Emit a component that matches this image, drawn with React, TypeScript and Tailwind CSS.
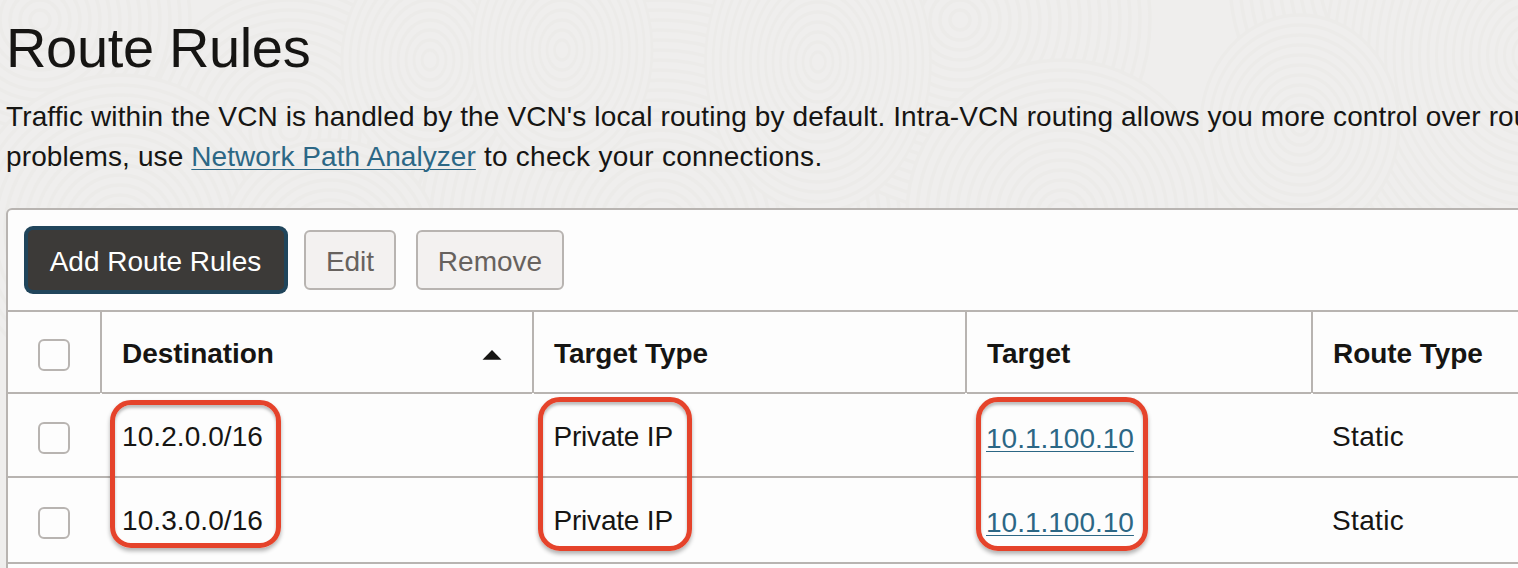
import type { ReactNode } from "react";

type Ripple = { cx: number; cy: number; r: number; sx?: number };

const ripples: Ripple[] = [
  { cx: 40, cy: 20, r: 150 },
  { cx: 660, cy: 230, r: 250 },
  { cx: 1420, cy: -20, r: 190 },
  { cx: 960, cy: 20, r: 190 },
  { cx: 290, cy: 130, r: 140 },
  { cx: 430, cy: 60, r: 110, sx: 0.8 },
  { cx: 120, cy: 230, r: 155 },
  { cx: 1530, cy: 55, r: 240, sx: 0.85 },
  { cx: 818, cy: 62, r: 150, sx: 0.75 },
  { cx: 562, cy: 50, r: 120, sx: 0.75 },
  { cx: 1300, cy: 125, r: 110, sx: 0.9 },
  { cx: 1062, cy: 215, r: 155 },
  { cx: 330, cy: 250, r: 110 },
];

function Texture() {
  return (
    <svg className="absolute inset-0 -z-10 h-full w-full" viewBox="0 0 1518 568" aria-hidden="true">
      {ripples.map((g, i) => (
        <g key={i} transform={`translate(${g.cx} ${g.cy}) scale(${g.sx ?? 1} 1)`}>
          <circle r={g.r} fill="#efeeed" />
          {Array.from({ length: Math.floor(g.r / 10) }, (_, k) => (
            <circle key={k} r={g.r - k * 10} fill="none" stroke="#ecebe9" strokeWidth={3.5} />
          ))}
        </g>
      ))}
    </svg>
  );
}

function Checkbox() {
  return <span className="block size-8 rounded-md border-2 border-[#b8b4b1] bg-[#fdfdfd]" />;
}

function HeadCell({ children, sorted }: { children: ReactNode; sorted?: boolean }) {
  return (
    <div className="relative flex h-[81px] justify-between border-l-2 border-[#b8b4b1] pt-[26px] pl-5 font-bold after:absolute after:top-[81px] after:-left-[2px] after:h-px after:w-[2px] after:bg-[#fdfdfd]">
      <span className="tracking-[-0.05px]">{children}</span>
      {sorted && (
        <svg className="mt-3 mr-[30px] h-[10px] w-5" viewBox="0 0 20 10">
          <path d="M0.5 9.7L10 0L19.5 9.7Z" fill="#161513" />
        </svg>
      )}
    </div>
  );
}

const columns = "grid grid-cols-[92px_432px_433px_346px_1fr] border-b-2 border-[#b8b4b1]";
const link = "text-[#2c6785] underline decoration-1 underline-offset-[3px]";

function Row({ destination, tall }: { destination: string; tall?: boolean }) {
  return (
    <div className={`${columns} ${tall ? "h-[86px]" : "h-[84px]"}`}>
      <div className={`pl-[30px] ${tall ? "pt-[29px]" : "pt-7"}`}>
        <Checkbox />
      </div>
      <div className="pt-[27px] pl-[22px] tracking-[0.08px]">{destination}</div>
      <div className="pt-[27px] pl-[21.5px] tracking-[-0.2px]">Private IP</div>
      <div className="pt-[29px] pl-[21px]">
        <a className={link}>10.1.100.10</a>
      </div>
      <div className="pt-[27px] pl-[21px] tracking-[0.35px]">Static</div>
    </div>
  );
}

const marker =
  "absolute border-[5px] border-[#e5432b] shadow-[0_3px_4px_rgba(0,0,0,0.3),inset_0_3px_3px_rgba(0,0,0,0.25)]";

export default function App() {
  return (
    <div className="relative isolate flex h-[568px] w-[1518px] flex-col overflow-hidden bg-[#efeeed] font-['Liberation_Sans',Arial,sans-serif] text-[28px] leading-8 text-[#161513]">
      <Texture />
      <h1 className="mt-4 ml-[6px] h-16 shrink-0 text-[56px] leading-[64px] tracking-[-0.35px]">Route Rules</h1>
      <p className="mt-[17px] ml-[6px] h-[111px] shrink-0 leading-10 tracking-[0.12px] whitespace-nowrap">
        Traffic within the VCN is handled by the VCN's local routing by default. Intra-VCN routing allows you more control over rou
        <br />
        problems, use <a className={`${link} tracking-[0.06px]`}>Network Path Analyzer</a>
        <span className="tracking-[0.27px]"> to check your connections.</span>
      </p>

      <section className="ml-[6px] h-[400px] w-[1530px] shrink-0 rounded-tl-md border-2 border-[#b8b4b1] bg-[#fdfdfd]">
        <div className="flex h-[102px] items-start gap-5 border-b-2 border-[#b8b4b1] pt-5 pl-5">
          <button className="h-[60px] w-64 rounded-[5px] bg-[#3c3a38] pt-1 pr-px text-white ring-4 ring-[#20455b]">
            Add Route Rules
          </button>
          <button className="h-[60px] w-[92px] rounded-md border-2 border-[#b8b4b1] bg-[#f3f1f0] pt-1 text-[#67625e]">
            Edit
          </button>
          <button className="h-[60px] w-[148px] rounded-md border-2 border-[#b8b4b1] bg-[#f3f1f0] pt-1 text-[#67625e]">
            Remove
          </button>
        </div>
        <div className={`${columns} h-[82px]`}>
          <div className="pt-[27px] pl-[30px]">
            <Checkbox />
          </div>
          <HeadCell sorted>Destination</HeadCell>
          <HeadCell>Target Type</HeadCell>
          <HeadCell>Target</HeadCell>
          <HeadCell>Route Type</HeadCell>
        </div>
        <Row destination="10.2.0.0/16" />
        <Row destination="10.3.0.0/16" tall />
      </section>

      <div className={`${marker} top-[400px] left-[110px] h-[148px] w-[171px] rounded-[21px]`} />
      <div className={`${marker} top-[397px] left-[538px] h-[154px] w-[154px] rounded-[22px]`} />
      <div className={`${marker} top-[397px] left-[976px] h-[154px] w-[172px] rounded-[22px]`} />
    </div>
  );
}
